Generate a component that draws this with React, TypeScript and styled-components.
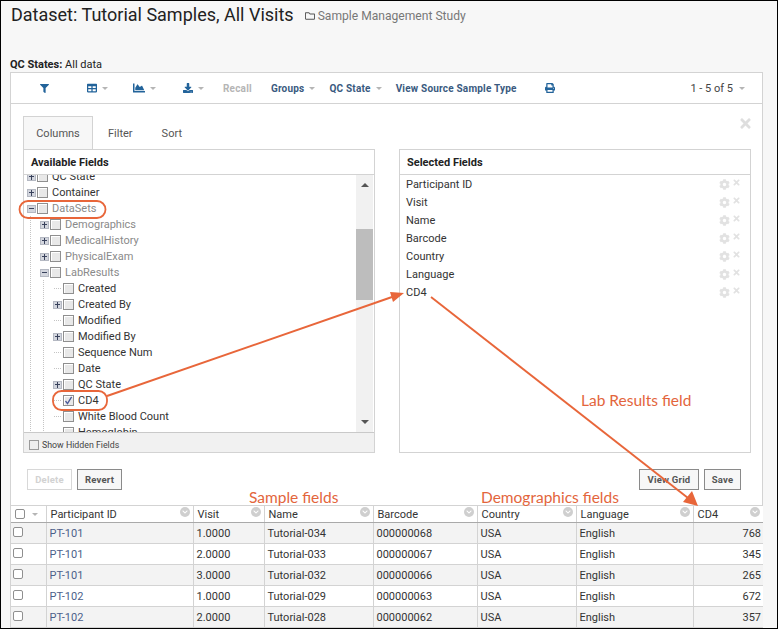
import React from "react";
import styled, { createGlobalStyle } from "styled-components";
import { FaFilter, FaTable, FaChartArea, FaDownload, FaPrint, FaCog, FaTimes, FaRegFolder, FaChevronDown } from "react-icons/fa";

const Global = createGlobalStyle`
  html, body { margin: 0; padding: 0; background: #fff; }
  * { box-sizing: border-box; }
`;

const Page = styled.div`
  position: relative;
  width: 778px;
  height: 629px;
  overflow: hidden;
  background: #f7f7f7;
  border: 1px solid #000;
  font-family: Roboto, "Liberation Sans", sans-serif;
  color: #222;
  padding: 0 14px 0 9px;
  display: flex;
  flex-direction: column;
`;

const TitleRow = styled.div`
  display: flex;
  align-items: baseline;
  gap: 11px;
  padding: 3px 0 0 1px;
  height: 55px;
`;
const Title = styled.h1`
  margin: 0;
  font-weight: 400;
  font-size: 18px;
  line-height: 22px;
  color: #222;
`;
const Crumb = styled.span`
  display: inline-flex;
  align-items: center;
  gap: 3px;
  font-size: 12.1px;
  color: #777;
  svg { font-size: 10px; color: #555; }
`;
const QcLine = styled.div`
  font-size: 11px;
  line-height: 14px;
  height: 16px;
  padding: 2px 0 0 0;
  color: #222;
  b { font-weight: 700; }
`;

const Panel = styled.div`
  flex: 1;
  background: #fff;
  border: 1px solid #d3d3d3;
  border-bottom: none;
  display: flex;
  flex-direction: column;
`;

const Toolbar = styled.div`
  height: 31px;
  flex: none;
  border-bottom: 1px solid #d3d3d3;
  display: flex;
  align-items: center;
  padding-right: 17px;
`;
const ToolItem = styled.span<{ $left: number; $disabled?: boolean }>`
  display: inline-flex;
  align-items: center;
  margin-left: ${(p) => p.$left}px;
  gap: 5px;
  font-size: 10px;
  font-weight: 700;
  letter-spacing: 0.2px;
  white-space: nowrap;
  color: ${(p) => (p.$disabled ? "#b5b5b5" : "#3a5a80")};
  svg { color: #22639a; }
`;
const Caret = styled.i`
  display: inline-block;
  width: 0;
  height: 0;
  border-left: 3.5px solid transparent;
  border-right: 3.5px solid transparent;
  border-top: 3.5px solid #b5b5b5;
`;
const Pager = styled.span`
  margin-left: auto;
  display: inline-flex;
  align-items: center;
  gap: 6px;
  font-size: 11px;
  color: #444;
`;

const Body = styled.div`
  flex: none;
  height: 401px;
  padding: 12px 11px 0 12px;
  display: flex;
  flex-direction: column;
`;
const TabsRow = styled.div`
  display: flex;
  align-items: flex-end;
  height: 33px;
  position: relative;
`;
const Tab = styled.div<{ $active?: boolean }>`
  height: 33px;
  width: ${(p) => (p.$active ? "70px" : "auto")};
  padding: ${(p) => (p.$active ? "0" : "0 13px 0 14px")};
  display: flex;
  align-items: center;
  justify-content: center;
  font-size: 11px;
  color: #555;
  background: ${(p) => (p.$active ? "#f7f7f7" : "transparent")};
  border: ${(p) => (p.$active ? "1px solid #d3d3d3" : "1px solid transparent")};
  border-bottom: none;
`;
const CloseX = styled.span`
  position: absolute;
  right: -2px;
  top: 0;
  color: #dedede;
  font-size: 15px;
  line-height: 15px;
`;
const Columns = styled.div`
  display: flex;
  gap: 24px;
`;
const Box = styled.div`
  width: 352px;
  height: 304px;
  border: 1px solid #d3d3d3;
  display: flex;
  flex-direction: column;
  overflow: hidden;
`;
const BoxHead = styled.div`
  flex: none;
  height: 25px;
  line-height: 26px;
  padding-left: 7px;
  font-size: 11px;
  font-weight: 700;
  color: #222;
  border-bottom: 1px solid #d3d3d3;
`;
const TreeWrap = styled.div`
  flex: none;
  height: 257px;
  display: flex;
  overflow: hidden;
`;
const TreeList = styled.div`
  flex: 1;
  margin-top: -7px;
`;
const Scrollbar = styled.div`
  width: 17px;
  flex: none;
  margin-right: 1px;
  background: #f1f1f1;
  display: flex;
  flex-direction: column;
  align-items: center;
`;
const ArrowUp = styled.i`
  margin-top: 8px;
  width: 0;
  height: 0;
  border-left: 4px solid transparent;
  border-right: 4px solid transparent;
  border-bottom: 4px solid #555;
`;
const ArrowDown = styled.i`
  margin-top: 120px;
  width: 0;
  height: 0;
  border-left: 4px solid transparent;
  border-right: 4px solid transparent;
  border-top: 4px solid #555;
`;
const Thumb = styled.div`
  margin-top: 42px;
  width: 100%;
  height: 71px;
  background: #bdbdbd;
`;
const TreeRow = styled.div`
  height: 16px;
  display: flex;
  align-items: center;
  padding-left: 3px;
`;
const Guide = styled.span`
  flex: none;
  width: 13px;
  height: 16px;
  background-image: linear-gradient(#c4c4c4 50%, transparent 50%);
  background-size: 1px 2px;
  background-repeat: repeat-y;
  background-position: 3px 0;
`;
const Expander = styled.span<{ $open?: boolean }>`
  flex: none;
  position: relative;
  width: 9px;
  height: 8px;
  margin-top: 1px;
  background: #d3d6de;
  border: 1px solid #b4b8c2;
  &::before {
    content: "";
    position: absolute;
    left: 1px;
    right: 1px;
    top: 2px;
    height: 1px;
    background: #39425c;
  }
  &::after {
    content: "";
    display: ${(p) => (p.$open ? "none" : "block")};
    position: absolute;
    top: 0;
    bottom: 0;
    left: 3px;
    width: 1px;
    background: #39425c;
  }
`;
const Elbow = styled.span`
  flex: none;
  width: 9px;
  height: 16px;
  background-image: linear-gradient(90deg, #c4c4c4 50%, transparent 50%);
  background-size: 2px 1px;
  background-repeat: repeat-x;
  background-position: 3px 8px;
`;
const TreeCheck = styled.span`
  flex: none;
  width: 11px;
  height: 11px;
  margin: 1px 4px 0 1px;
  background: #e8e8e8;
  border: 1px solid #8f8f8f;
  box-shadow: inset 1px 1px 0 #fff;
  display: inline-flex;
  align-items: center;
  justify-content: center;
`;
const TreeLabel = styled.span<{ $muted?: boolean }>`
  font-size: 11px;
  white-space: nowrap;
  color: ${(p) => (p.$muted ? "#8a8a8a" : "#333")};
`;
const HiddenBar = styled.div`
  flex: 1;
  background: #f1f1f1;
  border-top: 1px solid #c9c9c9;
  display: flex;
  align-items: center;
  padding: 5px 0 0 5px;
  font-size: 8.8px;
  color: #444;
  gap: 3px;
`;
const HiddenCheck = styled.span`
  width: 10px;
  height: 10px;
  background: #eee;
  border: 1px solid #9a9a9a;
`;
const SelRow = styled.div`
  height: 18px;
  display: flex;
  align-items: center;
  padding: 0 9px 0 6px;
  font-size: 11px;
  color: #333;
`;
const SelIcons = styled.span`
  margin-left: auto;
  display: inline-flex;
  gap: 2px;
  color: #e2e2e2;
  font-size: 11px;
  align-items: flex-start;
  svg:last-child { font-size: 9px; margin-top: -1px; }
`;
const Actions = styled.div`
  display: flex;
  gap: 5px;
  padding: 16px 10px 0 4px;
`;
const Btn = styled.button<{ $w: number; $disabled?: boolean }>`
  width: ${(p) => p.$w}px;
  height: 21px;
  padding: 0;
  background: ${(p) => (p.$disabled ? "#fff" : "#f7f7f7")};
  border: 1px solid ${(p) => (p.$disabled ? "#d8d8d8" : "#8a8a8a")};
  color: ${(p) => (p.$disabled ? "#d2d2d2" : "#555")};
  font-family: Roboto, sans-serif;
  font-weight: 700;
  font-size: 9.5px;
  letter-spacing: 0.2px;
`;
const Spacer = styled.div`
  flex: 1;
`;

const Grid = styled.table`
  border-collapse: collapse;
  table-layout: fixed;
  width: 752px;
  background: #fff;
  font-size: 11px;
`;
const Th = styled.th`
  height: 17px;
  padding: 0 0 0 4px;
  font-weight: 400;
  text-align: left;
  color: #333;
  background: #fff;
  border-top: 1px solid #d3d3d3;
  border-right: 1px solid #d3d3d3;
  border-bottom: 1px solid #a9a9a9;
  vertical-align: middle;
  &:last-child { border-right: none; }
`;
const ThInner = styled.div`
  display: flex;
  justify-content: space-between;
  align-items: flex-start;
  padding-right: 3px;
`;
const Circle = styled.span`
  width: 10px;
  height: 10px;
  border-radius: 50%;
  margin-top: -1px;
  background: #cfcfcf;
  color: #fff;
  display: inline-flex;
  align-items: center;
  justify-content: center;
  svg { font-size: 6px; }
`;
const Tr = styled.tr<{ $odd: boolean }>`
  background: ${(p) => (p.$odd ? "#f3f3f3" : "#fff")};
`;
const Td = styled.td<{ $right?: boolean }>`
  height: 21px;
  padding: 0 2px 0 3px;
  color: #333;
  text-align: ${(p) => (p.$right ? "right" : "left")};
  border-right: 1px solid #d3d3d3;
  border-bottom: 1px solid #d3d3d3;
  &:last-child { border-right: none; }
`;
const Link = styled.span`
  color: #4c5f8a;
`;
const RowCheck = styled.span`
  display: block;
  width: 10px;
  height: 10px;
  margin: -3px 0 0 -1px;
  background: #fff;
  border: 1px solid #8f8f8f;
  border-radius: 2px;
`;
const HeadCheck = styled.span`
  display: block;
  width: 10px;
  height: 10px;
  background: #fff;
  border: 1px solid #8f8f8f;
  border-radius: 2px;
`;
const HeadSel = styled.div`
  display: flex;
  align-items: center;
  gap: 7px;
`;

const Overlay = styled.svg`
  position: absolute;
  left: -1px;
  top: -1px;
  pointer-events: none;
`;
const Note = styled.span<{ $x: number; $y: number }>`
  position: absolute;
  left: ${(p) => p.$x}px;
  top: ${(p) => p.$y}px;
  font-family: Lato, "Open Sans", sans-serif;
  font-size: 15.5px;
  line-height: 18px;
  color: #e3653c;
  white-space: nowrap;
`;

const tree: { d: number; k: "plus" | "minus" | "leaf"; t: string; m?: boolean; c?: boolean }[] = [
  { d: 0, k: "plus", t: "QC State" },
  { d: 0, k: "plus", t: "Container" },
  { d: 0, k: "minus", t: "DataSets", m: true },
  { d: 1, k: "plus", t: "Demographics", m: true },
  { d: 1, k: "plus", t: "MedicalHistory", m: true },
  { d: 1, k: "plus", t: "PhysicalExam", m: true },
  { d: 1, k: "minus", t: "LabResults", m: true },
  { d: 2, k: "leaf", t: "Created" },
  { d: 2, k: "plus", t: "Created By" },
  { d: 2, k: "leaf", t: "Modified" },
  { d: 2, k: "plus", t: "Modified By" },
  { d: 2, k: "leaf", t: "Sequence Num" },
  { d: 2, k: "leaf", t: "Date" },
  { d: 2, k: "plus", t: "QC State" },
  { d: 2, k: "leaf", t: "CD4", c: true },
  { d: 2, k: "leaf", t: "White Blood Count" },
  { d: 2, k: "leaf", t: "Hemoglobin" },
];

const selected = ["Participant ID", "Visit", "Name", "Barcode", "Country", "Language", "CD4"];

const cols = [
  { t: "Participant ID", w: 147 },
  { t: "Visit", w: 71 },
  { t: "Name", w: 109 },
  { t: "Barcode", w: 104 },
  { t: "Country", w: 99 },
  { t: "Language", w: 117 },
  { t: "CD4", w: 70 },
];

const rows = [
  ["PT-101", "1.0000", "Tutorial-034", "000000068", "USA", "English", "768"],
  ["PT-101", "2.0000", "Tutorial-033", "000000067", "USA", "English", "345"],
  ["PT-101", "3.0000", "Tutorial-032", "000000066", "USA", "English", "265"],
  ["PT-102", "1.0000", "Tutorial-029", "000000063", "USA", "English", "672"],
  ["PT-102", "2.0000", "Tutorial-028", "000000062", "USA", "English", "357"],
];

export default function App() {
  return (
    <Page>
      <Global />
      <TitleRow>
        <Title>Dataset: Tutorial Samples, All Visits</Title>
        <Crumb>
          <FaRegFolder />
          Sample Management Study
        </Crumb>
      </TitleRow>
      <QcLine>
        <b>QC States:</b> All data
      </QcLine>
      <Panel>
        <Toolbar>
          <ToolItem $left={29}><FaFilter size={9} /></ToolItem>
          <ToolItem $left={38}><FaTable size={10} /><Caret /></ToolItem>
          <ToolItem $left={25}><FaChartArea size={12} /><Caret /></ToolItem>
          <ToolItem $left={27}><FaDownload size={10} /><Caret /></ToolItem>
          <ToolItem $left={19} $disabled>Recall</ToolItem>
          <ToolItem $left={19}>Groups<Caret /></ToolItem>
          <ToolItem $left={14}>QC State<Caret /></ToolItem>
          <ToolItem $left={14}>View Source Sample Type</ToolItem>
          <ToolItem $left={28}><FaPrint size={10} /></ToolItem>
          <Pager>1 - 5 of 5<Caret /></Pager>
        </Toolbar>
        <Body>
          <TabsRow>
            <Tab $active>Columns</Tab>
            <Tab>Filter</Tab>
            <Tab>Sort</Tab>
            <CloseX><FaTimes /></CloseX>
          </TabsRow>
          <Columns>
            <Box>
              <BoxHead>Available Fields</BoxHead>
              <TreeWrap>
                <TreeList>
                  {tree.map((n, i) => (
                    <TreeRow key={i}>
                      {Array.from({ length: n.d }).map((_, j) => (
                        <Guide key={j} />
                      ))}
                      {n.k === "leaf" ? <Elbow /> : <Expander $open={n.k === "minus"} />}
                      <TreeCheck>
                        {n.c && (
                          <svg width="9" height="9" viewBox="0 0 9 9" fill="none">
                            <path d="M1.5 5 L3.5 7.6 L7.6 0.8" stroke="#4a5a9a" strokeWidth="1.3" />
                          </svg>
                        )}
                      </TreeCheck>
                      <TreeLabel $muted={n.m}>{n.t}</TreeLabel>
                    </TreeRow>
                  ))}
                </TreeList>
                <Scrollbar>
                  <ArrowUp />
                  <Thumb />
                  <ArrowDown />
                </Scrollbar>
              </TreeWrap>
              <HiddenBar>
                <HiddenCheck />
                Show Hidden Fields
              </HiddenBar>
            </Box>
            <Box>
              <BoxHead>Selected Fields</BoxHead>
              <div>
                {selected.map((s) => (
                  <SelRow key={s}>
                    {s}
                    <SelIcons><FaCog /><FaTimes /></SelIcons>
                  </SelRow>
                ))}
              </div>
            </Box>
          </Columns>
          <Actions>
            <Btn $w={45} $disabled>Delete</Btn>
            <Btn $w={45}>Revert</Btn>
            <Spacer />
            <Btn $w={60}>View Grid</Btn>
            <Btn $w={37}>Save</Btn>
          </Actions>
        </Body>
        <Grid>
          <colgroup>
            <col style={{ width: 35 }} />
            {cols.map((c) => (
              <col key={c.t} style={{ width: c.w }} />
            ))}
          </colgroup>
          <thead>
            <tr>
              <Th>
                <HeadSel><HeadCheck /><Caret /></HeadSel>
              </Th>
              {cols.map((c) => (
                <Th key={c.t}>
                  <ThInner>
                    {c.t}
                    <Circle><FaChevronDown /></Circle>
                  </ThInner>
                </Th>
              ))}
            </tr>
          </thead>
          <tbody>
            {rows.map((r, i) => (
              <Tr key={i} $odd={i % 2 === 0}>
                <Td><RowCheck /></Td>
                {r.map((v, j) => (
                  <Td key={j} $right={j === 6}>
                    {j === 0 ? <Link>{v}</Link> : v}
                  </Td>
                ))}
              </Tr>
            ))}
          </tbody>
        </Grid>
      </Panel>

      <Overlay width="778" height="629" viewBox="0 0 778 629" fill="none">
        <rect x="19.5" y="201" width="86" height="17" rx="8.5" stroke="#e8663a" strokeWidth="1.8" />
        <rect x="53" y="391" width="54" height="19" rx="8.5" stroke="#e8663a" strokeWidth="1.8" />
        <path d="M107 396 L392 297" stroke="#e8663a" strokeWidth="1.9" />
        <path d="M404 293 L390 292 L393 302 Z" fill="#e8663a" />
        <path d="M431 297 L688 498" stroke="#e8663a" strokeWidth="1.9" />
        <path d="M698 506 L692 491 L683 502 Z" fill="#e8663a" />
      </Overlay>
      <Note $x={248} $y={487}>Sample fields</Note>
      <Note $x={480} $y={487}>Demographics fields</Note>
      <Note $x={580} $y={390}>Lab Results field</Note>
    </Page>
  );
}
